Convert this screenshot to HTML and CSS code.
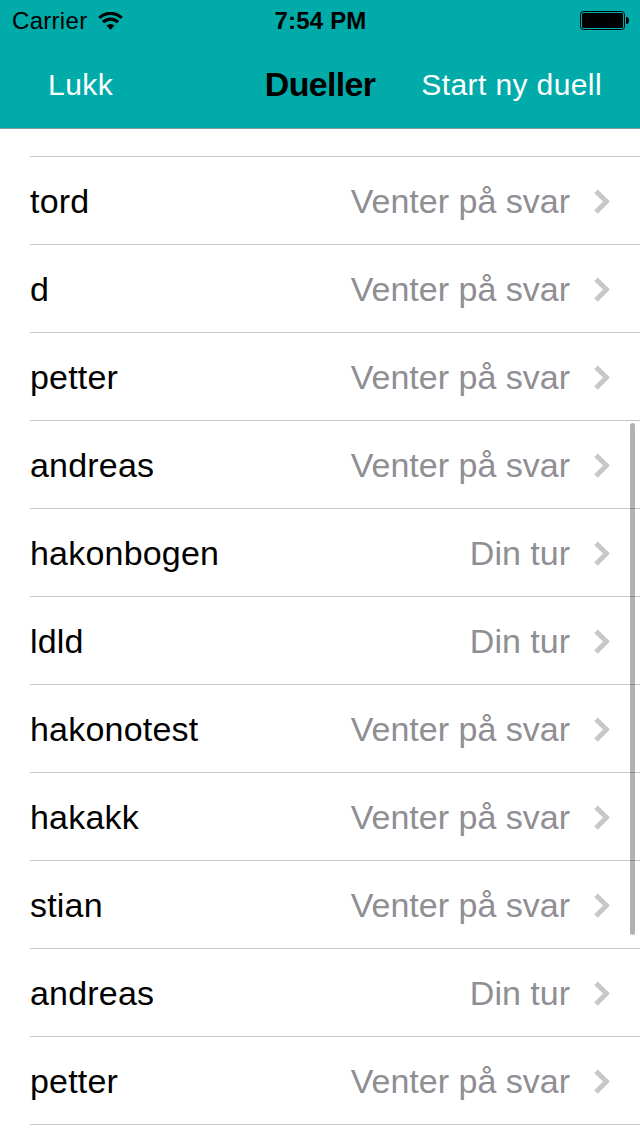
FILE: index.html
```html
<!DOCTYPE html>
<html lang="no">
<head>
	<meta charset="utf-8">
	<title>Dueller</title>
	<link rel="stylesheet" href="styles.css">
</head>
<body>
	<div class="header">
		<div class="status">
			<div class="carrier">
				<span class="carrier-name">Carrier</span>
				<svg class="wifi" width="25" height="18" viewBox="0 0 25 18">
					<path d="M12.5 17.8L8.4 13.6Q12.5 10.6 16.6 13.6Z"/>
					<path class="arc" d="M5 10.2A10.6 10.6 0 0 1 20 10.2"/>
					<path class="arc" d="M1.3 5.9A16 16 0 0 1 23.7 5.9"/>
				</svg>
			</div>
			<span class="time">7:54 PM</span>
			<svg class="battery" width="49" height="19" viewBox="0 0 49 19">
				<rect class="frame" x="0.5" y="0.5" width="44" height="18" rx="3"/>
				<rect x="2" y="2" width="41" height="15" rx="1.5"/>
				<path d="M46 6Q49 6 49 9.5T46 13Z"/>
			</svg>
		</div>
		<div class="nav">
			<a class="close">Lukk</a>
			<h1 class="title">Dueller</h1>
			<a class="new">Start ny duell</a>
		</div>
	</div>
	<ul class="list" id="list"></ul>
	<div class="scrollbar"></div>
	<script src="script.js"></script>
</body>
</html>
```
FILE: styles.css
```css
*{
	box-sizing: border-box;
}
body{
	margin: 0;
	height: 1136px;
	overflow: hidden;
	position: relative;
	background-color: #fff;
	color: #000;
	font-family: "Liberation Sans", Arial, sans-serif;
}
.header{
	height: 129px;
	background-color: #00abaa;
	border-bottom: 1px solid #7d9f9f;
}
.status{
	display: grid;
	grid-template-columns: minmax(0,1fr) auto minmax(0,1fr);
	align-items: center;
	height: 41px;
	padding: 0 11px 0 12px;
}
.carrier{
	display: flex;
	align-items: center;
	gap: 11px;
}
.carrier-name{
	font-size: 24px;
	letter-spacing: 0.3px;
}
.time{
	font-size: 24px;
	font-weight: bold;
	letter-spacing: 0.2px;
}
.arc{
	fill: none;
	stroke: #000;
	stroke-width: 3.2;
}
.battery{
	justify-self: end;
}
.frame{
	fill: none;
	stroke: #000;
}
.nav{
	display: grid;
	grid-template-columns: minmax(0,1fr) auto minmax(0,1fr);
	align-items: center;
	height: 87px;
	color: #fff;
	font-size: 30px;
}
.close{
	padding-left: 48px;
	letter-spacing: 0.5px;
}
.title{
	margin: 0;
	color: #000;
	font-size: 34px;
	letter-spacing: -0.7px;
}
.new{
	justify-self: end;
	padding-right: 38px;
	white-space: nowrap;
	letter-spacing: 0.4px;
}
.list{
	margin: 27px 0 0 30px;
	padding: 0;
	list-style: none;
	border-top: 1px solid #c8c7cc;
}
.item{
	display: flex;
	align-items: center;
	height: 88px;
	padding: 2px 30px 0 0;
	border-bottom: 1px solid #c8c8c9;
	font-size: 34px;
}
.name{
	flex: 1;
	letter-spacing: 0.2px;
}
.state{
	color: #8e8e93;
}
.arrow{
	margin-left: 24px;
	fill: none;
	stroke: #c7c7cc;
	stroke-width: 5;
}
.scrollbar{
	position: absolute;
	top: 423px;
	right: 5px;
	width: 5px;
	height: 512px;
	border-radius: 3px;
	background-color: rgba(0,0,0,.3);
}
```
FILE: script.js
```js
var duels = [
	["tord", "Venter på svar"],
	["d", "Venter på svar"],
	["petter", "Venter på svar"],
	["andreas", "Venter på svar"],
	["hakonbogen", "Din tur"],
	["ldld", "Din tur"],
	["hakonotest", "Venter på svar"],
	["hakakk", "Venter på svar"],
	["stian", "Venter på svar"],
	["andreas", "Din tur"],
	["petter", "Venter på svar"]
];
var list = document.getElementById("list");
for(var i=0;i<duels.length;i++){
	var li = document.createElement("li");
	li.className = "item";
	li.innerHTML = '<span class="name">'+duels[i][0]+'</span>'
		+'<span class="state">'+duels[i][1]+'</span>'
		+'<svg class="arrow" width="16" height="26" viewBox="0 0 16 26"><path d="M2 2.2L12.4 12.6L2 23"/></svg>';
	list.appendChild(li);
}
```
